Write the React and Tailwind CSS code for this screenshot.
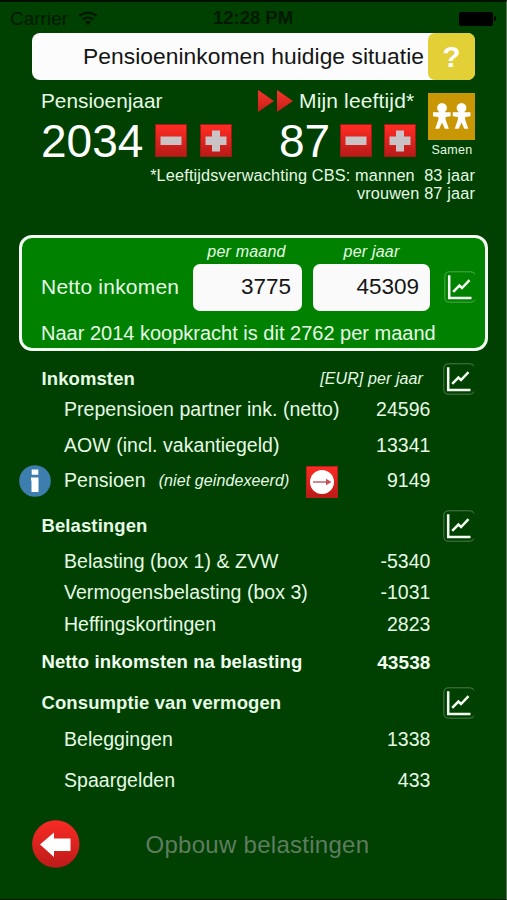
import React, { useState } from 'react';

const inkomsten = [
  { label: 'Prepensioen partner ink. (netto)', value: 24596, className: 'mt-[2px]' },
  { label: 'AOW (incl. vakantiegeld)', value: 13341, className: 'mt-3' },
];

const belastingen = [
  { label: 'Belasting (box 1) & ZVW', value: -5340, className: 'mt-[7px]' },
  { label: 'Vermogensbelasting (box 3)', value: -1031, className: 'mt-[7px]' },
  { label: 'Heffingskortingen', value: 2823, className: 'mt-2' },
];

const vermogen = [
  { label: 'Beleggingen', value: 1338, className: 'mt-2' },
  { label: 'Spaargelden', value: 433, className: 'mt-[17px]' },
];

function WifiIcon() {
  return (
    <svg width="20" height="15" viewBox="0 0 20 15" fill="none" stroke="#001a00" strokeWidth="2.4">
      <path d="M1.2 5.2C6.2 0.5 13.8 0.5 18.8 5.2" />
      <path d="M4.7 8.7C7.8 5.9 12.2 5.9 15.3 8.7" />
      <path d="M10 14.2L6.9 11C8.7 9.4 11.3 9.4 13.1 11Z" fill="#001a00" stroke="none" />
    </svg>
  );
}

function ChartButton() {
  return (
    <button className="ml-[14px] h-8 w-8 shrink-0" title="Grafiek">
      <svg width="32" height="32" viewBox="0 0 32 32" fill="none">
        <path
          d="M31 3.5Q30 0.8 27 0.8H5.5Q0.8 0.8 0.8 5.5V26.5Q0.8 31.2 5.5 31.2H27Q30 31.2 31 28.5"
          stroke="#ffffff"
          strokeOpacity="0.3"
        />
        <path d="M5.2 4.3V27H27.5" stroke="#f4fff4" strokeWidth="2.5" />
        <path d="M9.2 20.8L15.4 14.6L18 17L25.5 9.2" stroke="#f4fff4" strokeWidth="2.5" />
      </svg>
    </button>
  );
}

function StepButton({ plus, onClick }) {
  return (
    <button
      onClick={onClick}
      className="flex h-[33px] w-8 items-center justify-center border border-[#a01c10] bg-linear-to-b from-[#ff2d24] to-[#b91a18]"
    >
      <svg width="22" height="22" viewBox="0 0 22 22" fill="#c9c3c6">
        <path d={plus ? 'M7 0.5H15V6.5H21.5V15H15V21.5H7V15H0.5V6.5H7Z' : 'M0.5 6.5H21.5V15H0.5Z'} />
      </svg>
    </button>
  );
}

function Row({ label, value, className }) {
  return (
    <div className={`flex h-6 items-center pt-[2px] pl-16 text-[19.5px] tracking-[0.04px] ${className}`}>
      <span className="flex-1">{label}</span>
      <span className="mr-[75.5px]">{value}</span>
    </div>
  );
}

function SectionHeader({ title, note, className }) {
  return (
    <div className={`flex h-8 items-center pr-[31px] pl-[41.5px] ${className}`}>
      <h2 className="flex-1 text-[18.5px] font-bold tracking-[0.1px]">{title}</h2>
      {note && <span className="mr-[6px] text-[16px] italic tracking-[0.1px]">{note}</span>}
      <ChartButton />
    </div>
  );
}

export default function App() {
  const [jaar, setJaar] = useState(2034);
  const [leeftijd, setLeeftijd] = useState(87);

  const step = n => {
    setJaar(jaar + n);
    setLeeftijd(leeftijd + n);
  };

  return (
    <div className="flex h-[900px] w-[507px] flex-col overflow-hidden border-t-2 border-r border-b border-t-[#001000] border-r-[#5d775d] border-b-[#001a00] bg-[#004000] font-['Liberation_Sans',Arial,sans-serif] leading-none whitespace-pre text-[#e6fae6]">
      {/* Status bar */}
      <div className="grid h-[31px] grid-cols-3 items-center pt-[2px] pr-[10px] pl-[10px] text-[19px] text-[#001a00]">
        <div className="flex items-center gap-[10px]">
          <span>Carrier</span>
          <WifiIcon />
        </div>
        <span className="text-center text-[18.5px] font-bold">12:28 PM</span>
        <div className="flex items-center justify-end gap-[1px]">
          <div className="h-[14px] w-[34px] rounded-[2px] bg-black" />
          <div className="h-[5px] w-[2px] rounded-r-full bg-black" />
        </div>
      </div>

      {/* Title */}
      <div className="mr-[31px] ml-8 flex h-[47px] shrink-0 items-center justify-end rounded-[8px] bg-[#fcfcfc]">
        <h1 className="mr-[4px] text-[22.8px] tracking-[0.04px] text-[#151515]">Pensioeninkomen huidige situatie</h1>
        <button className="flex h-full w-[47px] items-center justify-center rounded-[7px] bg-[#e3cf36] text-[30px] font-bold text-white">
          ?
        </button>
      </div>

      {/* Year and age */}
      <div className="mt-[10px] flex h-[76px] shrink-0 pr-[31px] pl-[41px]">
        <div className="w-[215px]">
          <div className="flex h-[22px] items-center text-[20.8px]">Pensioenjaar</div>
          <div className="mt-[12px] flex h-[33px] items-center">
            <span className="w-[114px] text-[46px] text-white">{jaar}</span>
            <StepButton onClick={() => step(-1)} />
            <div className="w-[13px]" />
            <StepButton plus onClick={() => step(1)} />
          </div>
        </div>
        <div className="flex-1">
          <div className="flex h-[22px] items-center text-[21px] tracking-[0.15px]">
            <svg width="38" height="24" viewBox="0 0 38 24" className="mr-[4px] ml-[1px]">
              <defs>
                <linearGradient id="arrow" x1="0" y1="0" x2="0" y2="1">
                  <stop offset="0" stopColor="#f8362a" />
                  <stop offset="1" stopColor="#c41d18" />
                </linearGradient>
              </defs>
              <path d="M1 1L17 12L1 23ZM20 1L36 12L20 23Z" fill="url(#arrow)" />
            </svg>
            <span className="pb-[1px]">Mijn leeftijd*</span>
          </div>
          <div className="mt-[12px] flex h-[33px] items-center pl-[23px]">
            <span className="w-[61px] text-[46px] text-white">{leeftijd}</span>
            <StepButton onClick={() => step(-1)} />
            <div className="w-[12px]" />
            <StepButton plus onClick={() => step(1)} />
          </div>
        </div>
        <div className="mt-[3px] flex w-[47px] flex-col items-center">
          <svg width="47" height="47" viewBox="0 0 47 47">
            <rect width="47" height="47" fill="#c99606" />
            <g fill="#ffffff">
              <path d="M10.9 18.6A4.9 4.9 0 1 1 17.1 18.6V19.2H22.6V23.2L17.6 24V26.5L20.8 35.8H16.8L14 29.5L11.2 35.8H7.2L10.4 26.5V24L5 23.2V19.2H10.9Z" />
              <path d="M30.4 18.6A4.9 4.9 0 1 1 36.6 18.6V19.2H42.4V23.2L37.1 24V26.5L40.3 35.8H36.3L33.5 29.5L30.7 35.8H26.7L29.9 26.5V24L24.8 23.2V19.2H30.4Z" />
            </g>
          </svg>
          <span className="mt-[4px] pl-[1px] text-[12.5px] tracking-[0.3px]">Samen</span>
        </div>
      </div>

      <div className="mt-[1px] mr-[31px] text-right text-[16.3px] leading-[17.5px] tracking-[0.15px]">
        <p>*Leeftijdsverwachting CBS: mannen  83 jaar</p>
        <p>vrouwen 87 jaar</p>
      </div>

      {/* Net income */}
      <div className="mt-[33px] mr-[18px] ml-[19px] h-[116px] shrink-0 rounded-[13px] border-[3px] border-[#f2fff2] bg-[#008200] pl-[19px]">
        <div className="flex h-[25px] items-center pt-[3px] text-[16px] italic tracking-[0.2px]">
          <span className="ml-[151px] w-[109px] text-center">per maand</span>
          <span className="ml-[12px] w-[117px] text-center">per jaar</span>
        </div>
        <div className="flex h-[48px] items-center">
          <span className="w-[152px] pb-[1px] text-[21px] tracking-[0.22px]">Netto inkomen</span>
          <div className="flex h-[47px] w-[109px] items-center justify-end rounded-[7px] bg-[#fafafa] pt-[1px] pr-[11px] text-[22.5px] text-[#151515]">
            3775
          </div>
          <div className="ml-[11px] flex h-[47px] w-[117px] items-center justify-end rounded-[7px] bg-[#fafafa] pt-[1px] pr-[11px] text-[22.5px] text-[#151515]">
            45309
          </div>
          <ChartButton />
        </div>
        <div className="flex h-[42px] items-center pt-[1px] text-[20px]">
          Naar 2014 koopkracht is dit 2762 per maand
        </div>
      </div>

      <SectionHeader title="Inkomsten" note="[EUR] per jaar" className="mt-3" />
      {inkomsten.map(row => <Row key={row.label} {...row} />)}
      <div className="mt-[7px] flex h-[33px] items-center pl-[19px] text-[19.5px] tracking-[0.04px]">
        <svg width="32" height="32" viewBox="0 0 32 32">
          <circle cx="16" cy="16" r="15.8" fill="#3c7fae" />
          <path d="M12.7 4.5H19.3V9.7H12.7ZM12 12.5H19.5V27H12.5V15.5H12Z" fill="#ffffff" />
        </svg>
        <span className="ml-[13px]">Pensioen</span>
        <span className="ml-[13px] pt-[1px] text-[16px] italic tracking-[0.1px]">(niet geindexeerd)</span>
        <button className="mt-[3px] ml-auto h-8 w-8 border border-[#b82018] bg-linear-to-b from-[#fb2c24] to-[#ba1a18]">
          <svg width="30" height="30" viewBox="0 0 30 30">
            <circle cx="15" cy="15" r="12" fill="#ffffff" />
            <path d="M6 15H20" stroke="#d07a80" strokeWidth="1.8" />
            <path d="M19 11.7L24.5 15L19 18.3Z" fill="#c54d58" />
          </svg>
        </button>
        <span className="mr-[75.5px] w-[93px] pt-[1px] text-right">9149</span>
      </div>

      <SectionHeader title="Belastingen" className="mt-[13px]" />
      {belastingen.map(row => <Row key={row.label} {...row} />)}
      <div className="mt-[14px] flex h-6 items-center pl-[41.5px] text-[18.5px] font-bold tracking-[0.1px] text-[#f0fff0]">
        <span className="flex-1">Netto inkomsten na belasting</span>
        <span className="mr-[75.5px] text-[19px] tracking-[0.1px]">43538</span>
      </div>

      <SectionHeader title="Consumptie van vermogen" className="mt-[13px]" />
      {vermogen.map(row => <Row key={row.label} {...row} />)}

      {/* Footer */}
      <div className="mt-7 flex h-12 items-center pl-8">
        <button title="Terug">
          <svg width="48" height="48" viewBox="0 0 48 48" className="block">
            <defs>
              <linearGradient id="back" x1="0" y1="0" x2="0" y2="1">
                <stop offset="0" stopColor="#f92b24" />
                <stop offset="1" stopColor="#bd1b19" />
              </linearGradient>
            </defs>
            <circle cx="23.8" cy="24" r="23.7" fill="url(#back)" />
            <path d="M8 24.5L22 12.5V18.5H38.5V31H22V37Z" fill="#ffffff" />
          </svg>
        </button>
        <span className="ml-[65.5px] pt-[1px] text-[24px] tracking-[0.28px] text-[#5f7c60]">Opbouw belastingen</span>
      </div>
    </div>
  );
}
